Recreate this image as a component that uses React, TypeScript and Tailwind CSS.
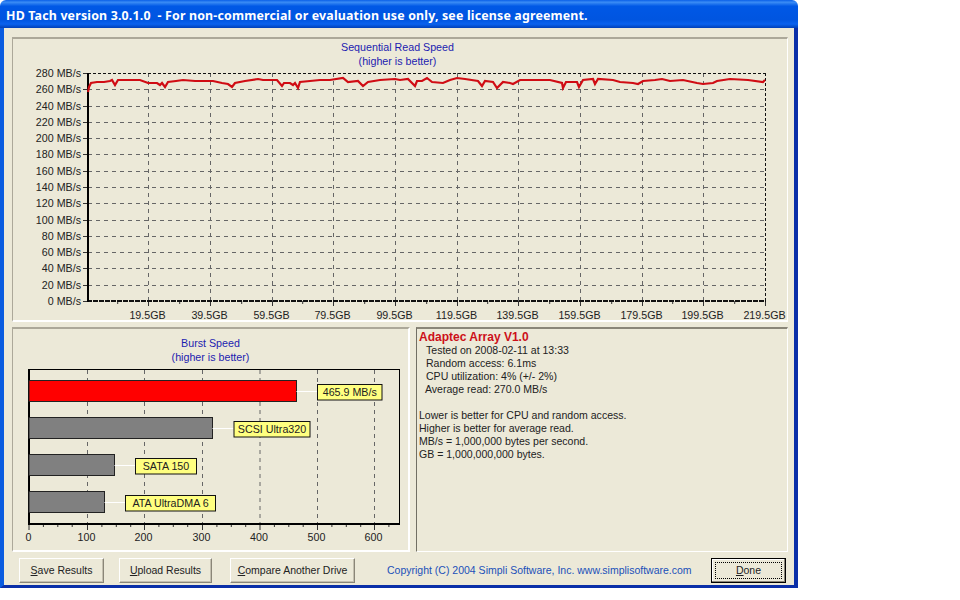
const font = { fontFamily: '"Liberation Sans", Arial, sans-serif' };

const linePts =
  "88,92 89,87 91,83 97,82 104,82 110,81 112,80 115,85 118,80 128,80 140,80 148,83 157,83 160,85 162,83 165,87 168,82 176,81 183,80 195,81 213,81 222,83 228,84 232,87 235,83 245,81 258,79 263,80 277,80 282,86 284,83 290,83 293,85 295,83 298,88 300,82 310,81 320,80 330,80 343,78 348,82 358,81 363,86 368,82 380,80 395,79 400,80 408,79 415,86 417,81 422,81 427,78 432,82 443,83 450,80 457,78 465,79 478,81 482,86 485,81 493,82 497,88 503,82 510,83 513,84 520,80 535,80 550,80 562,83 563,88 566,82 577,82 579,87 583,80 593,79 595,84 598,79 613,80 620,82 633,83 638,84 643,81 655,80 662,79 670,81 683,80 697,83 703,84 713,83 717,81 730,79 748,80 763,82 765,80";

const yLabels = [280, 260, 240, 220, 200, 180, 160, 140, 120, 100, 80, 60, 40, 20, 0];
const xLabels = ["19.5GB", "39.5GB", "59.5GB", "79.5GB", "99.5GB", "119.5GB", "139.5GB", "159.5GB", "179.5GB", "199.5GB", "219.5GB"];
const xGrid = [148.5, 210.5, 272.5, 333.5, 395.5, 457.5, 518.5, 580.5, 642.5, 703.5, 765.5];
const yAt = (i: number) => 73 + i * 16.29;

function SeqChart() {
  return (
    <svg width="773" height="252" viewBox="13 70 773 252" className="block overflow-visible" style={font}>
      {yLabels.map((v, i) => (
        <g key={v}>
          <text x="81" y={yAt(i) + 4} textAnchor="end" fontSize="10.7" fill="#222">{v} MB/s</text>
          <line x1="83" x2="88" y1={Math.round(yAt(i)) + 0.5} y2={Math.round(yAt(i)) + 0.5} stroke="#333" />
          {i > 0 && i < 14 && (
            <line x1="88" x2="765" y1={Math.round(yAt(i)) + 0.5} y2={Math.round(yAt(i)) + 0.5} stroke="#666" strokeDasharray="4 4" />
          )}
        </g>
      ))}
      {xGrid.map((x, i) => (
        <g key={x}>
          {i < 10 && <line x1={x} x2={x} y1="73" y2="301" stroke="#666" strokeDasharray="4 4" />}
          <line x1={x} x2={x} y1="301" y2="306" stroke="#333" />
          <line x1={x - 30.8} x2={x - 30.8} y1="301" y2="304" stroke="#333" />
          <text x={x - 1} y="319" textAnchor="middle" fontSize="10.7" fill="#222">{xLabels[i]}</text>
        </g>
      ))}
      <line x1="88" x2="765" y1="73.5" y2="73.5" stroke="#111" strokeDasharray="3 2" />
      <line x1="765.5" x2="765.5" y1="73" y2="301" stroke="#111" strokeDasharray="3 2" />
      <line x1="87" x2="766" y1="301" y2="301" stroke="#111" strokeWidth="2" strokeDasharray="5 1" />
      <line x1="88" x2="88" y1="73" y2="302" stroke="#000" strokeWidth="2" />
      <polyline points={linePts} fill="none" stroke="#d00c14" strokeWidth="2.2" />
    </svg>
  );
}

const bars = [
  { y: 380, x2: 296.5, fill: "#ff0000", label: "465.9 MB/s", lx: 317, lw: 65.5 },
  { y: 417, x2: 212.5, fill: "#808080", label: "SCSI Ultra320", lx: 233.5, lw: 77 },
  { y: 454, x2: 114.5, fill: "#808080", label: "SATA 150", lx: 135, lw: 62 },
  { y: 491, x2: 104.5, fill: "#808080", label: "ATA UltraDMA 6", lx: 125, lw: 91 },
];
const bGrid = [29, 87.5, 144.5, 202.5, 260, 317.5, 374.5];

function BurstChart() {
  return (
    <svg width="396" height="184" viewBox="13 366 396 184" className="block" style={font}>
      {bGrid.map((x, i) => (
        <g key={x}>
          {i > 0 && <line x1={x} x2={x} y1="370" y2="524" stroke="#666" strokeDasharray="4 4" />}
          <line x1={x} x2={x} y1="524" y2="530" stroke="#333" />
          {[14.4, 28.8, 43.2].map((d) =>
            x + d < 399 ? <line key={d} x1={x + d} x2={x + d} y1="524" y2="527" stroke="#333" /> : null
          )}
          <text x={i === 0 ? 28.5 : x - 1} y="541" textAnchor="middle" fontSize="10.7" fill="#222">{i * 100}</text>
        </g>
      ))}
      <rect x="29" y="369.5" width="370.5" height="154.5" fill="none" stroke="#000" />
      <line x1="28.5" x2="400" y1="524" y2="524" stroke="#000" strokeWidth="2" />
      <line x1="29" x2="29" y1="369" y2="525" stroke="#000" strokeWidth="2" />
      {bars.map((b) => (
        <g key={b.label}>
          <rect x="29" y={b.y + 0.5} width={b.x2 - 29} height="21" fill={b.fill} stroke="#222" />
          <line x1={b.x2} x2={b.lx} y1={b.y + 11.5} y2={b.y + 11.5} stroke="#fff" />
          <rect x={b.lx + 0.5} y={b.y + 4.5} width={b.lw - 1} height="15.5" fill="#ffff80" stroke="#111" />
          <text x={b.lx + b.lw / 2} y={b.y + 16} textAnchor="middle" fontSize="10.7" fill="#222">{b.label}</text>
        </g>
      ))}
    </svg>
  );
}

function Btn({ first, rest, w }: { first: string; rest: string; w: string }) {
  return (
    <button
      className={`${w} h-[25px] shrink-0 border border-t-white border-l-white border-r-[#8a8678] border-b-[#8a8678] shadow-[inset_-1px_-1px_0_#c4c0b0] bg-[#ece9d8] text-[10.5px] text-[#222]`}
    >
      <span className="underline">{first}</span>
      {rest}
    </button>
  );
}

export default function App() {
  return (
    <div className="w-[960px] h-[600px] bg-white overflow-hidden" style={font}>
      <div className="w-[798px] h-[588px] flex flex-col">
        <div className="h-[28px] shrink-0 rounded-t-[6px] bg-[linear-gradient(180deg,#0a5fe8_0%,#3a8cf5_8%,#0058e6_22%,#0055e0_70%,#0a62ee_86%,#0040b8_100%)] flex items-center pl-[6px] pt-[5px]">
          <span className="text-white font-bold text-[12.4px] tracking-[0.17px] whitespace-pre [font-family:'Noto_Sans',sans-serif]">
            HD Tach version 3.0.1.0  - For non-commercial or evaluation use only, see license agreement.
          </span>
        </div>
        <div className="flex-1 min-h-0 flex flex-col bg-[#ece9d8] border-l-[4px] border-l-[#0a5ce0] border-r-[4px] border-r-[#0a2fa8] border-b-[3px] border-b-[#0a2fa8] pl-[8px] pr-[6px] pt-[9px]">
          <div className="h-[285px] shrink-0 border-2 border-t-[#aca899] border-l-[#aca899] border-r-white border-b-white border-l-[1px] border-r-[1px]">
            <div className="h-[31px] pt-[1px] pr-[5px] text-center text-[10.7px] leading-[14px] text-[#1c1cb0]">
              <div>Sequential Read Speed</div>
              <div>(higher is better)</div>
            </div>
            <SeqChart />
          </div>
          <div className="h-[225px] shrink-0 mt-[5px] flex gap-[6px]">
            <div className="w-[398px] shrink-0 border-t-2 border-b-2 border-l border-r-2 border-t-[#aca899] border-l-[#aca899] border-r-white border-b-white">
              <div className="h-[37px] pt-[7px] text-center text-[10.7px] leading-[14px] text-[#1c1cb0]">
                <div>Burst Speed</div>
                <div>(higher is better)</div>
              </div>
              <BurstChart />
            </div>
            <div className="flex-1 border-t-2 border-l border-r border-b border-t-[#8a8678] border-l-[#716f64] border-r-white border-b-white pl-[2px] pt-[2px] text-[10.55px] leading-[13px] text-[#222]">
              <div className="font-bold text-[12px] text-[#cc1018]">Adaptec Array V1.0</div>
              <div className="pl-[7px]">Tested on 2008-02-11 at 13:33</div>
              <div className="pl-[7px]">Random access: 6.1ms</div>
              <div className="pl-[7px]">CPU utilization: 4% (+/- 2%)</div>
              <div className="pl-[6px]">Average read: 270.0 MB/s</div>
              <div className="mt-[13px]">Lower is better for CPU and random access.</div>
              <div>Higher is better for average read.</div>
              <div>MB/s = 1,000,000 bytes per second.</div>
              <div>GB = 1,000,000,000 bytes.</div>
            </div>
          </div>
          <div className="flex items-center mt-[6px] pl-[7px]">
            <Btn first="S" rest="ave Results" w="w-[85px]" />
            <div className="w-[15px] shrink-0" />
            <Btn first="U" rest="pload Results" w="w-[93px]" />
            <div className="w-[18px] shrink-0" />
            <Btn first="C" rest="ompare Another Drive" w="w-[125px]" />
            <div className="ml-[32px] w-[324px] shrink-0 text-[10.5px] text-[#1a50b8] whitespace-nowrap">
              Copyright (C) 2004 Simpli Software, Inc. www.simplisoftware.com
            </div>
            <button className="w-[75px] h-[25px] shrink-0 border border-black bg-[#ece9d8] shadow-[inset_-1px_-1px_0_#8a8678,inset_1px_1px_0_#fff] p-[3px] text-[10.5px] text-[#222]">
              <span className="flex items-center justify-center w-full h-full border border-dotted border-black">
                <span className="underline">D</span>one
              </span>
            </button>
          </div>
        </div>
      </div>
    </div>
  );
}
